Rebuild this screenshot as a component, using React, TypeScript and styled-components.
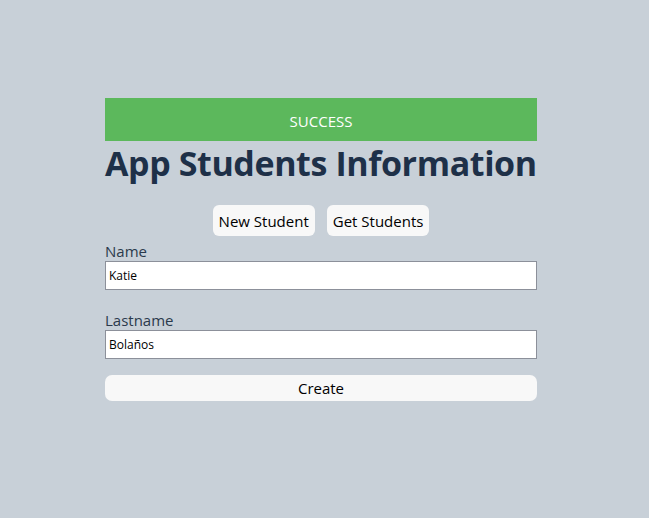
import React from "react";
import styled, { createGlobalStyle } from "styled-components";

const Global = createGlobalStyle`
  html, body { margin: 0; padding: 0; }
  body {
    background: #c8d0d8;
    font-family: "Open Sans", "Noto Sans", sans-serif;
    min-height: 518px;
  }
`;

const Page = styled.div`
  display: flex;
  justify-content: center;
  padding-top: 98px;
  padding-right: 7px;
`;

const Container = styled.div`
  width: 432px;
  display: flex;
  flex-direction: column;
`;

const Alert = styled.div`
  background: #5cb85c;
  color: #ffffff;
  height: 43px;
  display: flex;
  align-items: center;
  justify-content: center;
  font-size: 15px;
  padding-top: 2px;
  box-sizing: border-box;
`;

const Title = styled.h1`
  margin: 0;
  font-size: 34px;
  font-weight: 700;
  color: #1e3048;
  line-height: 44px;
  white-space: nowrap;
  letter-spacing: -0.4px;
`;

const Nav = styled.div`
  display: flex;
  justify-content: center;
  gap: 12px;
  margin-top: 20px;
`;

const NavButton = styled.button`
  font-family: inherit;
  font-size: 15px;
  color: #000;
  background: #f8f8f8;
  border: none;
  border-radius: 6px;
  height: 31px;
  padding: 0 6px;
`;

const Field = styled.label`
  display: flex;
  flex-direction: column;
  margin-top: ${(p: { $top: number }) => p.$top}px;
`;

const LabelText = styled.span`
  font-size: 15px;
  color: #2b3a4c;
  line-height: 20px;
`;

const Input = styled.input`
  box-sizing: border-box;
  height: 29px;
  width: 100%;
  border: 1px solid #8c909a;
  background: #fff;
  font-family: inherit;
  font-size: 12px;
  color: #000;
  padding: 0 3px;
  outline: none;
`;

const CreateButton = styled.button`
  margin-top: 16px;
  height: 26px;
  width: 100%;
  border: none;
  border-radius: 7px;
  background: #f8f8f8;
  font-family: inherit;
  font-size: 15px;
  color: #000;
`;

export default function App() {
  return (
    <>
      <Global />
      <Page>
        <Container>
          <Alert>SUCCESS</Alert>
          <Title>App Students Information</Title>
          <Nav>
            <NavButton>New Student</NavButton>
            <NavButton>Get Students</NavButton>
          </Nav>
          <Field $top={5}>
            <LabelText>Name</LabelText>
            <Input defaultValue="Katie" />
          </Field>
          <Field $top={20}>
            <LabelText>Lastname</LabelText>
            <Input defaultValue="Bolaños" />
          </Field>
          <CreateButton>Create</CreateButton>
        </Container>
      </Page>
    </>
  );
}
